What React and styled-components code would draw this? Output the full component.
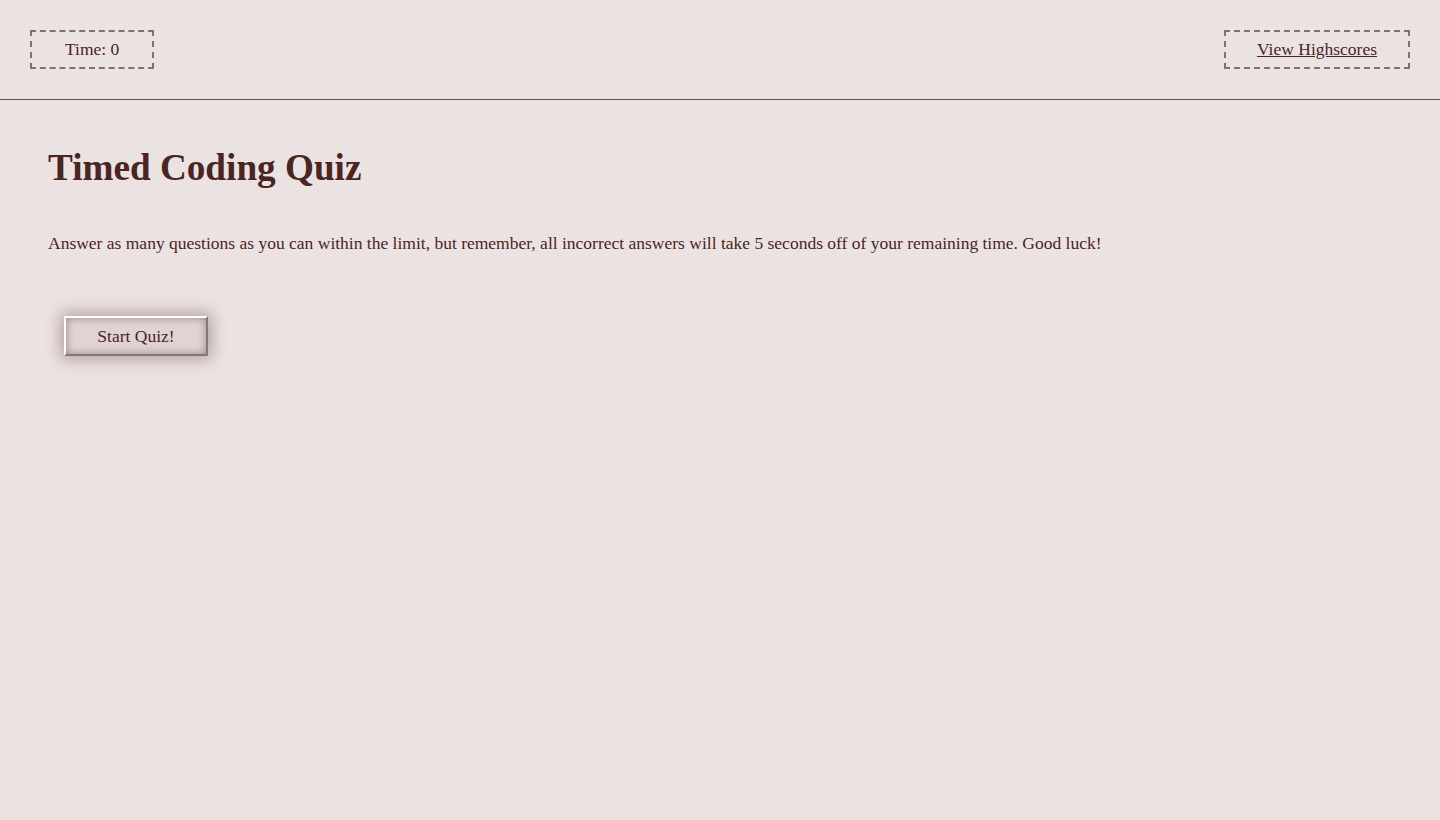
import React from "react";
import styled, { createGlobalStyle } from "styled-components";

const Global = createGlobalStyle`
  html, body { margin: 0; padding: 0; }
  html { background: #ebe3e2; }
  body {
    min-height: 100vh;
    background: #ebe3e2;
    color: #4a2522;
    font-family: "Liberation Serif", "Times New Roman", serif;
    font-size: 17.5px;
  }
`;

const Header = styled.header`
  display: flex;
  justify-content: space-between;
  align-items: flex-start;
  height: 100px;
  padding: 30px 30px 0;
  box-sizing: border-box;
  border-bottom: 1px solid #5a5552;
`;

const DashedBox = styled.div`
  border: 2px dashed #8c6c6a;
  padding: 0 ${(p) => p.$px}px;
  height: 39px;
  box-sizing: border-box;
  display: flex;
  align-items: center;
  font-size: 17.5px;
  color: #4a2522;
`;

const Link = styled.a`
  color: #4a2522;
  text-decoration: underline;
  cursor: pointer;
`;

const Main = styled.main`
  padding: 50px 48px 60px;
  display: flex;
  flex-direction: column;
  align-items: flex-start;
`;

const Title = styled.h1`
  margin: 0;
  font-size: 37.2px;
  font-weight: bold;
  line-height: 36px;
  color: #4a2522;
`;

const Intro = styled.p`
  margin: 46px 0 0;
  font-size: 17.5px;
  line-height: 22px;
  color: #4a2522;
`;

const StartButton = styled.button`
  margin: 62px 0 0 16px;
  width: 144px;
  height: 40px;
  box-sizing: border-box;
  font-family: inherit;
  font-size: 17.5px;
  color: #4a2522;
  background: #e0d4d3;
  border-style: solid;
  border-width: 2px;
  border-color: #ffffff #7a7a78 #7a7a78 #ffffff;
  box-shadow: inset 0 0 9px rgba(110, 60, 60, 0.55), 0 0 16px 3px rgba(90, 50, 50, 0.4);
  cursor: pointer;
`;

export default function App() {
  return (
    <>
      <Global />
      <Header>
        <DashedBox $px={33}>Time: 0</DashedBox>
        <DashedBox $px={31}>
          <Link>View Highscores</Link>
        </DashedBox>
      </Header>
      <Main>
        <Title>Timed Coding Quiz</Title>
        <Intro>
          Answer as many questions as you can within the limit, but remember, all incorrect answers will take 5 seconds off of your remaining time. Good luck!
        </Intro>
        <StartButton>Start Quiz!</StartButton>
      </Main>
    </>
  );
}
